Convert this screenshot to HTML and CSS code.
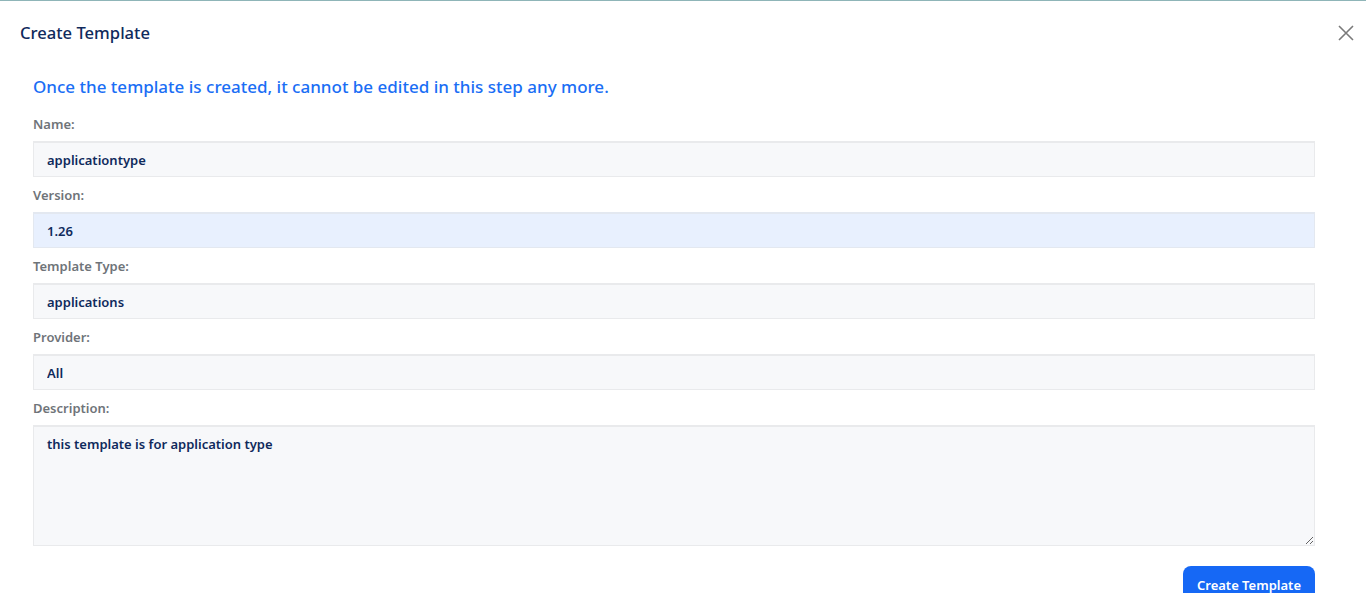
FILE: index.html
```html
<!DOCTYPE html>
<html>
<head>
<meta charset="utf-8">
<link rel="stylesheet" href="styles.css">
</head>
<body>
<div class="modal">
  <div class="modal-header">
    <h2 class="modal-title">Create Template</h2>
    <button class="close-btn" aria-label="Close">
      <svg width="16" height="16" viewBox="0 0 16 16"><path d="M1 1L15 15M15 1L1 15" stroke="#7a7a7a" stroke-width="1.6" fill="none"/></svg>
    </button>
  </div>
  <div class="modal-body">
    <p class="warning">Once the template is created, it cannot be edited in this step any more.</p>
    <div class="field">
      <label class="label">Name:</label>
      <input class="input" value="applicationtype">
    </div>
    <div class="field">
      <label class="label">Version:</label>
      <input class="input input-filled" value="1.26">
    </div>
    <div class="field">
      <label class="label">Template Type:</label>
      <input class="input" value="applications">
    </div>
    <div class="field">
      <label class="label">Provider:</label>
      <input class="input" value="All">
    </div>
    <div class="field">
      <label class="label">Description:</label>
      <textarea class="input textarea">this template is for application type</textarea>
    </div>
    <div class="actions">
      <button class="primary-btn">Create Template</button>
    </div>
  </div>
</div>
</body>
</html>
```
FILE: styles.css
```css
* { box-sizing: border-box; }
html, body { margin: 0; padding: 0; background: #fff; overflow: hidden; }
body { font-family: "Noto Sans", "Open Sans", sans-serif; color: #0f2a5c; }
.modal { border-top: 1px solid #8fb5b8; height: 593px; }
.modal-header {
  display: flex; align-items: center; justify-content: space-between;
  padding: 0 12px 0 20px; height: 64px;
}
.modal-title { margin: 0; font-size: 16.6px; font-weight: 500; color: #0f2a5c; line-height: 24px; }
.close-btn { background: none; border: 0; padding: 0; width: 16px; height: 16px; display: flex; cursor: pointer; }
.modal-body { padding: 10px 51px 0 33px; }
.warning { margin: 0 0 16px; font-size: 17px; font-weight: 500; color: #1a6ef5; line-height: 24px; }
.field { display: flex; flex-direction: column; }
.field + .field { margin-top: 9px; }
.label { font-size: 13px; font-weight: 600; color: #6f7479; line-height: 18px; margin-bottom: 8px; }
.input {
  width: 100%; height: 36px; margin: 0;
  background: #f7f8fa; border: 1px solid #e9eaec; border-top-width: 2px;
  padding: 0 13px; font-family: inherit; font-size: 13px; font-weight: 600; color: #0f2a5c;
  outline: none;
}
.input-filled { background: #e8f0fe; border-color: #e3e8f0; }
.textarea { height: 121px; padding: 8px 13px; resize: vertical; line-height: 18px; display: block; }
.actions { display: flex; justify-content: flex-end; padding-top: 20px; }
.primary-btn {
  background: #1668f5; color: #fff; border: 0; border-radius: 8px;
  height: 38px; padding: 0 14px; font-family: inherit; font-size: 13px; font-weight: 600;
}
```
